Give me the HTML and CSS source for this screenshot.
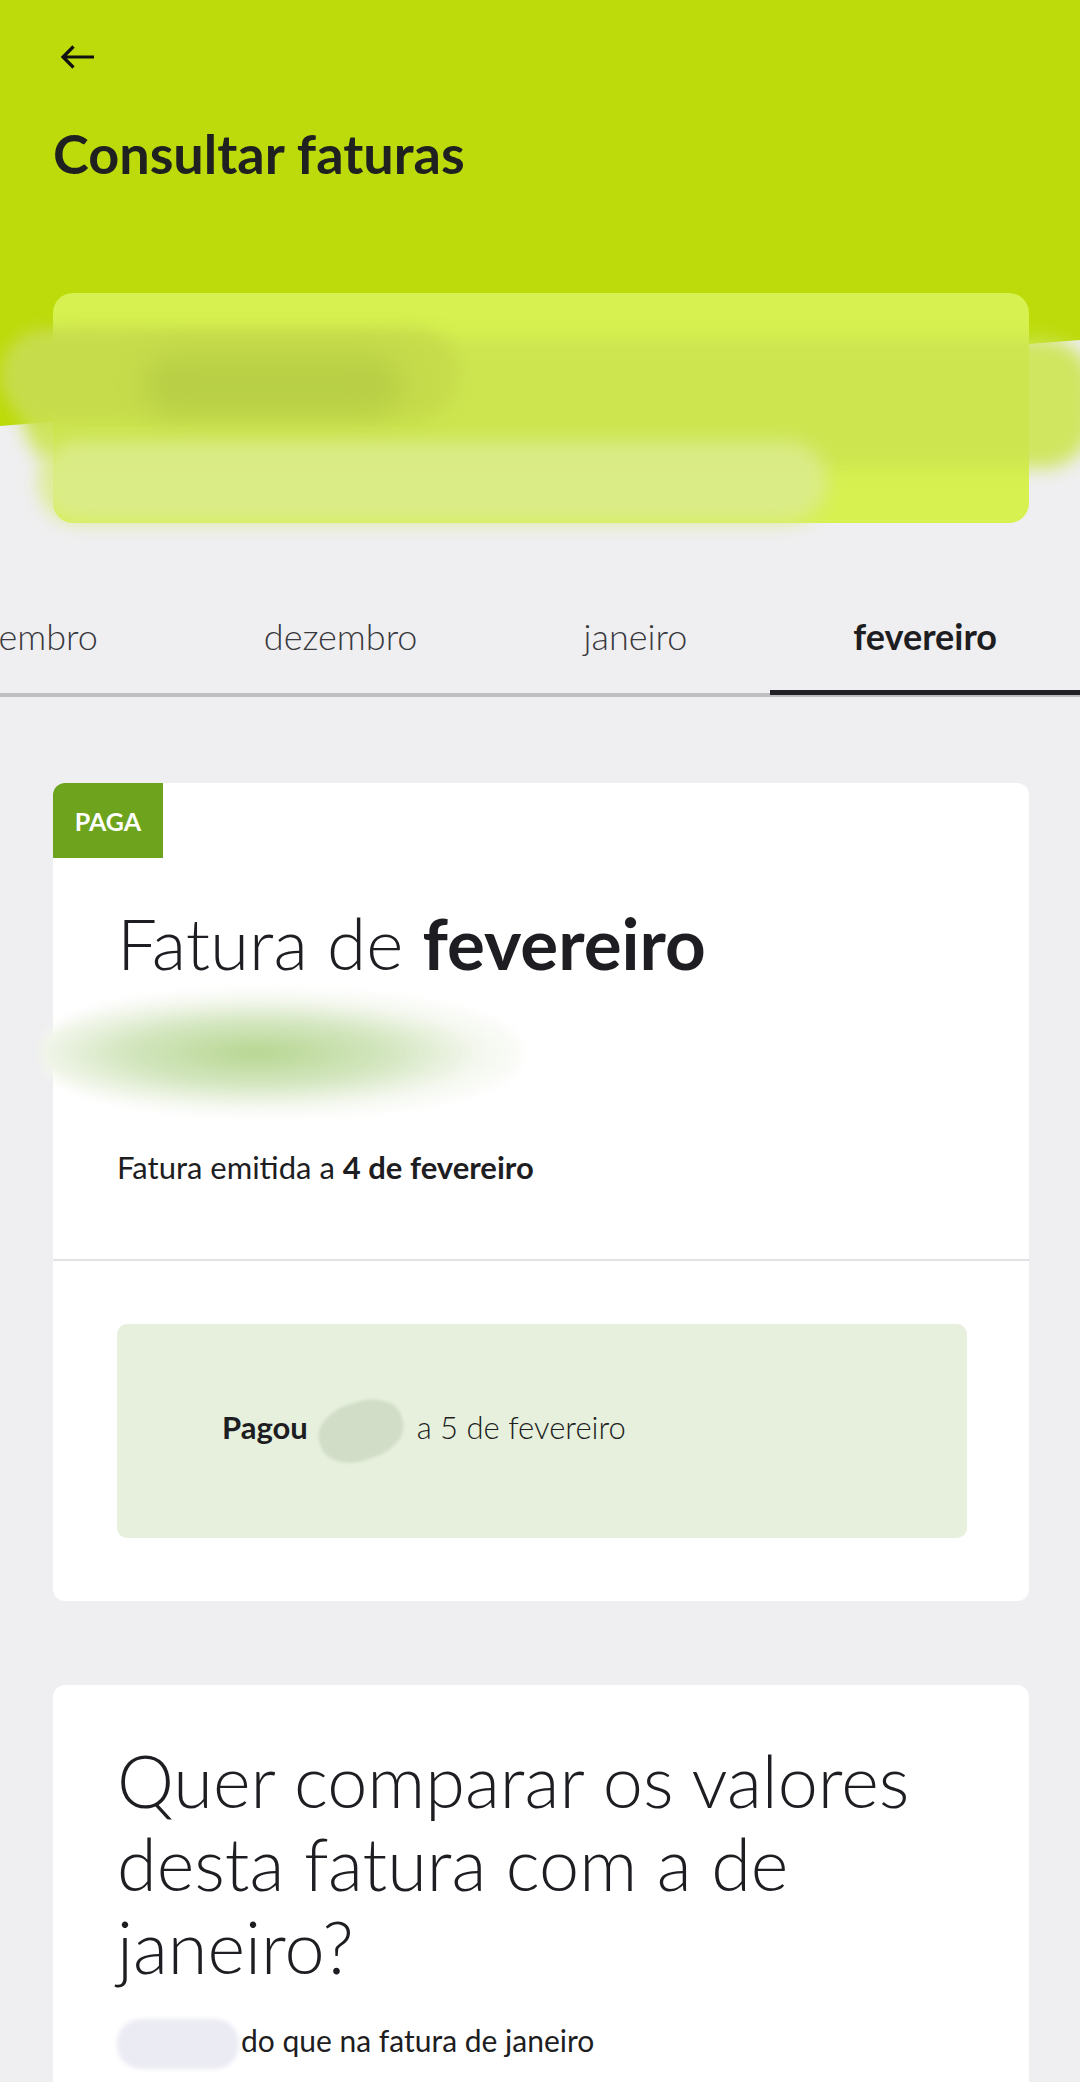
FILE: index.html
```html
<!DOCTYPE html>
<html lang="pt">
<head>
    <meta charset="UTF-8">
    <meta name="viewport" content="width=device-width, initial-scale=1.0">
    <title>Consultar faturas</title>
    <link rel="stylesheet" href="styles.css">
</head>
<body>
    <header class="hero">
        <a class="back" href="#" aria-label="Voltar">
            <svg width="36" height="26" viewBox="0 0 36 26">
                <path d="M34 13H3M13.5 2.5L3 13l10.5 10.5" fill="none" stroke="#111" stroke-width="3.2" stroke-linejoin="miter"/>
            </svg>
        </a>
        <h1>Consultar faturas</h1>

        <div class="summary">
            <!-- dados da conta escondidos na captura -->
            <span class="smudge smudge-band"></span>
            <span class="smudge smudge-dark"></span>
            <span class="smudge smudge-core"></span>
            <span class="smudge smudge-low"></span>
        </div>
    </header>

    <nav class="tabs">
        <a class="tab" href="#">novembro</a>
        <a class="tab" href="#">dezembro</a>
        <a class="tab" href="#">janeiro</a>
        <a class="tab active" href="#">fevereiro</a>
    </nav>

    <main class="content">
        <section class="card">
            <div class="card-top">
                <span class="badge">PAGA</span>
                <h2 class="invoice-title">Fatura de <strong>fevereiro</strong></h2>
                <div class="amount"></div>
                <p class="issued">Fatura emitida a <strong>4 de fevereiro</strong></p>
            </div>
            <div class="card-bottom">
                <div class="paid-box">
                    <p><strong>Pagou</strong> <span class="hidden-value"></span> a 5 de fevereiro</p>
                </div>
            </div>
        </section>

        <section class="card compare">
            <h2 class="compare-title">Quer comparar os valores desta fatura com a de janeiro?</h2>
            <p class="compare-text"><span class="hidden-diff"></span>do que na fatura de janeiro</p>
        </section>
    </main>
</body>
</html>
```

FILE: styles.css
```css
body {
    margin: 0;
    padding: 0;
    background-color: #efeff1;
    color: #1d1d22;
    font-family: Lato, "Open Sans", sans-serif;
    height: 2082px;
    overflow: hidden;
}

/* green top area with the slanted edge */
.hero {
    position: relative;
    padding-top: 44px;
}

.hero::before {
    content: "";
    position: absolute;
    top: 0;
    left: 0;
    width: 100%;
    height: 430px;
    background-color: #bddb0a;
    clip-path: polygon(0 0, 100% 0, 100% 340px, 0 426px);
}

.back {
    position: relative;
    display: block;
    width: 36px;
    height: 26px;
    margin-left: 60px;
}

.back svg {
    display: block;
}

.hero h1 {
    position: relative;
    margin: 53px 0 0 53px;
    font-size: 54px;
    line-height: 62px;
    font-weight: 700;
    color: #1f2020;
}

.summary {
    position: relative;
    height: 230px;
    margin: 108px 51px 0 53px;
    border-radius: 20px;
    background-color: #d7f150;
}

.smudge {
    position: absolute;
    display: block;
    border-radius: 50px;
}

.smudge-band {
    left: -30px;
    top: 45px;
    width: 1070px;
    height: 130px;
    background-color: rgba(204, 228, 80, 0.9);
    filter: blur(9px);
}

.smudge-dark {
    left: -53px;
    top: 36px;
    width: 460px;
    height: 92px;
    background-color: #c7dc4b;
    filter: blur(8px);
}

.smudge-core {
    left: 90px;
    top: 62px;
    width: 260px;
    height: 60px;
    background-color: #b8cf46;
    filter: blur(14px);
}

.smudge-low {
    left: -15px;
    top: 148px;
    width: 790px;
    height: 82px;
    background-color: rgba(218, 235, 140, 0.9);
    filter: blur(9px);
}

/* month tabs, scrolled to the last one */
.tabs {
    display: flex;
    justify-content: flex-end;
    margin-top: 93px;
    padding-bottom: 2px;
    box-shadow: inset 0 -4px 0 #bebdc2;
}

.tab {
    flex-shrink: 0;
    padding: 0 83px 39px;
    font-size: 36px;
    line-height: 40px;
    font-weight: 300;
    color: #38383e;
    text-decoration: none;
}

.tab.active {
    font-weight: 700;
    color: #1d1d22;
    box-shadow: inset 0 -5px 0 #222226;
}

.content {
    padding: 86px 51px 0 53px;
}

.card {
    background-color: #ffffff;
    border-radius: 12px;
}

.card-top {
    padding: 0 64px 72px;
    border-bottom: 2px solid #e2e2e5;
}

.badge {
    display: flex;
    align-items: center;
    justify-content: center;
    width: 110px;
    height: 75px;
    margin-left: -64px;
    border-top-left-radius: 12px;
    background-color: #6ea41d;
    color: #ffffff;
    font-size: 25px;
    font-weight: 700;
}

.invoice-title {
    margin: 45px 0 0;
    font-size: 71px;
    line-height: 80px;
    font-weight: 300;
}

.invoice-title strong {
    font-weight: 700;
}

.amount {
    width: 480px;
    height: 124px;
    margin: 8px 0 0 -76px;
    border-radius: 45%;
    background: radial-gradient(ellipse at 45% 50%, #b7d691 0%, #d3e6bf 35%, rgba(244, 247, 238, 0.95) 60%, rgba(255, 255, 255, 0) 80%);
    filter: blur(5px);
}

.issued {
    margin: 32px 0 0;
    font-size: 31px;
    line-height: 40px;
}

.card-bottom {
    padding: 63px 62px 63px 64px;
}

.paid-box {
    display: flex;
    align-items: center;
    height: 214px;
    padding-left: 105px;
    border-radius: 10px;
    background-color: #e6f0dc;
}

.paid-box p {
    margin: 0;
    font-size: 31px;
    line-height: 40px;
    font-weight: 300;
}

.paid-box strong {
    font-weight: 700;
}

.hidden-value {
    display: inline-block;
    width: 86px;
    height: 58px;
    margin: 0 4px 0 2px;
    vertical-align: middle;
    border-radius: 45%;
    background-color: #d2ddc8;
    transform: rotate(-18deg);
    filter: blur(1.5px);
}

.compare {
    margin-top: 84px;
    padding: 54px 64px 40px;
}

.compare-title {
    margin: 0;
    font-size: 72px;
    line-height: 83px;
    font-weight: 300;
}

.compare-text {
    margin: 31px 0 0;
    font-size: 30px;
    line-height: 40px;
}

.hidden-diff {
    display: inline-block;
    width: 122px;
    height: 50px;
    margin-right: 2px;
    vertical-align: middle;
    border-radius: 24px;
    background-color: #ebebf4;
    filter: blur(2px);
}
```
